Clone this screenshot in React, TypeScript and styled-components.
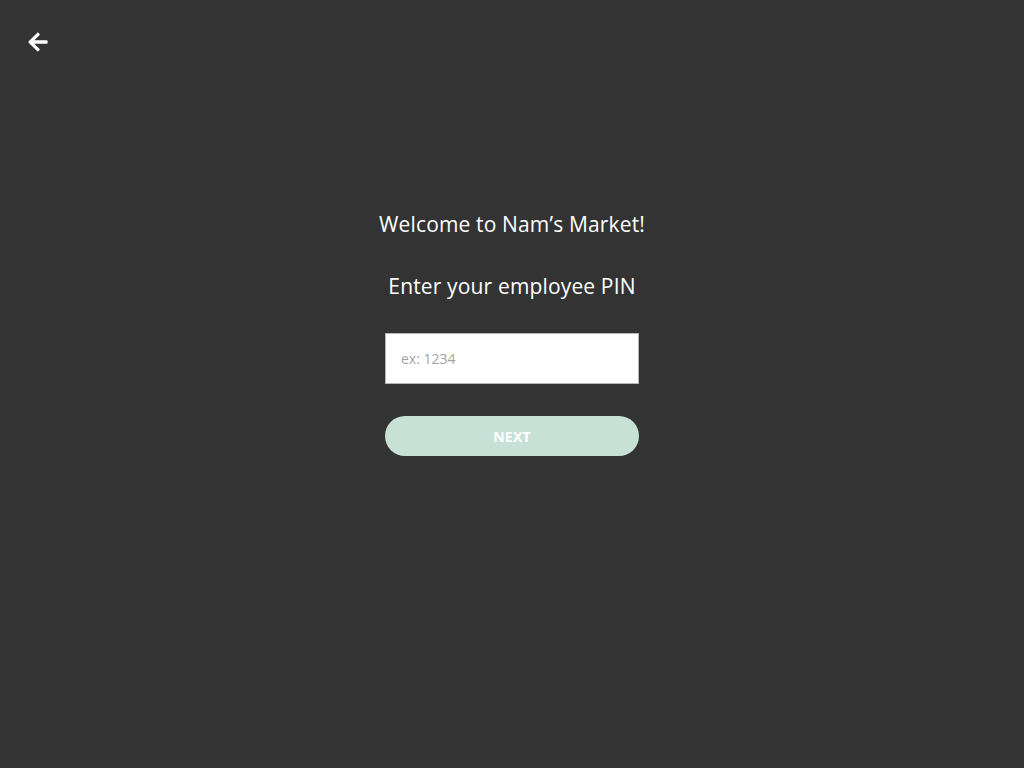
import React from "react";
import styled, { createGlobalStyle } from "styled-components";
import { FaArrowLeft } from "react-icons/fa";

const GlobalStyle = createGlobalStyle`
  html, body {
    margin: 0;
    padding: 0;
    background: #333333;
    font-family: "Open Sans", "Liberation Sans", sans-serif;
  }
`;

const Page = styled.div`
  width: 1024px;
  height: 768px;
  background: #333333;
  display: flex;
  flex-direction: column;
`;

const TopBar = styled.div`
  height: 84px;
  padding: 0 0 0 27px;
  display: flex;
  align-items: center;
`;

const BackButton = styled.button`
  background: transparent;
  border: none;
  padding: 0;
  color: #ffffff;
  font-size: 22px;
  display: flex;
  align-items: center;
  cursor: pointer;
`;

const Content = styled.div`
  display: flex;
  flex-direction: column;
  align-items: center;
  padding-top: 125px;
`;

const Heading = styled.h1<{ $mb: number }>`
  margin: 0 0 ${(p) => p.$mb}px;
  font-size: 21px;
  line-height: 30px;
  font-weight: 500;
  color: #ffffff;
  letter-spacing: 0.15px;
`;

const PinInput = styled.input`
  box-sizing: border-box;
  width: 254px;
  height: 51px;
  border: 1px solid #b5b5b5;
  background: #ffffff;
  padding: 0 15px;
  font-family: inherit;
  font-size: 14px;
  color: #333;
  outline: none;
  margin-bottom: 32px;
  &::placeholder {
    color: #a3a3a3;
  }
`;

const NextButton = styled.button`
  width: 254px;
  height: 40px;
  border: none;
  border-radius: 20px;
  background: #c8e1d7;
  color: #ffffff;
  font-family: inherit;
  font-weight: 700;
  font-size: 14px;
  letter-spacing: 0.2px;
`;

export default function App(): JSX.Element {
  return (
    <Page>
      <GlobalStyle />
      <TopBar>
        <BackButton aria-label="Back">
          <FaArrowLeft />
        </BackButton>
      </TopBar>
      <Content>
        <Heading $mb={32}>Welcome to Nam’s Market!</Heading>
        <Heading $mb={32}>Enter your employee PIN</Heading>
        <PinInput placeholder="ex: 1234" />
        <NextButton>NEXT</NextButton>
      </Content>
    </Page>
  );
}
